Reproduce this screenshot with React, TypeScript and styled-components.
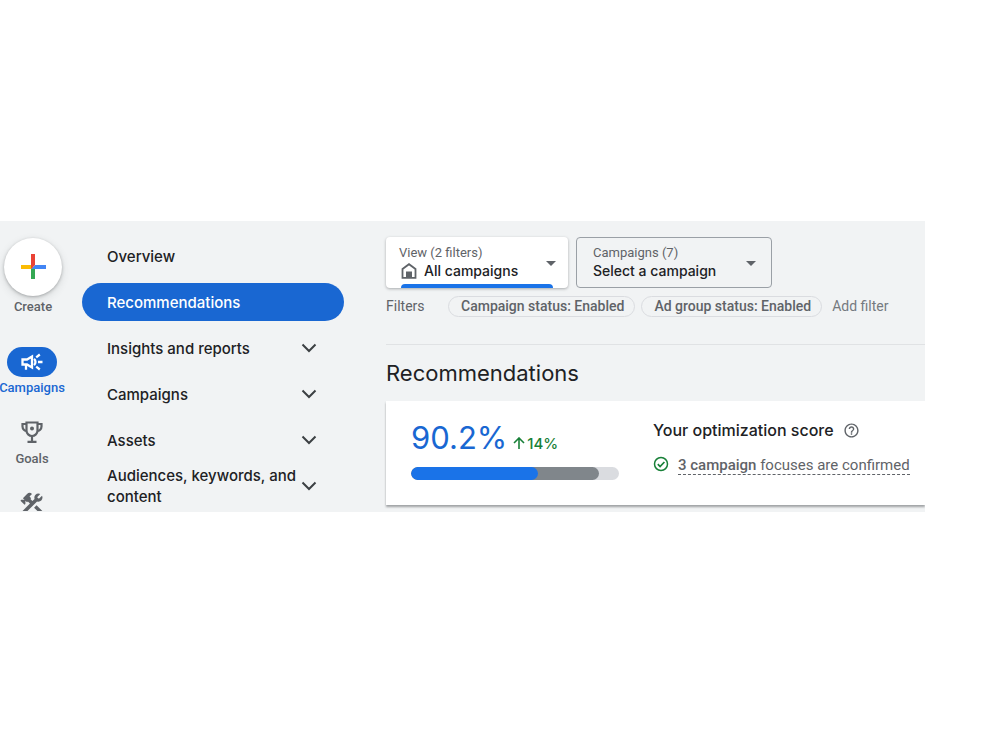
import React from "react";
import styled, { createGlobalStyle, css } from "styled-components";
import { MdConstruction, MdHelpOutline } from "react-icons/md";

const display = `"Google Sans", Inter, "Liberation Sans", sans-serif`;
const text = `Roboto, "Liberation Sans", sans-serif`;

const GlobalStyle = createGlobalStyle`
  * { box-sizing: border-box; }
  body { margin: 0; background: #fff; color: #202124; font-family: ${text}; }
  button, select { font: inherit; color: inherit; border: 0; background: none; padding: 0; margin: 0; cursor: pointer; }
  a { color: inherit; text-decoration: none; }
  h1, h2, p { margin: 0; font-weight: 400; }
  svg { display: block; flex: none; }
`;

const Shell = styled.div`
  display: grid;
  grid-template-columns: 66px 262px minmax(0, 1fr);
  column-gap: 16px;
  margin: 221px 75px 0 0;
  background: #f1f3f4;
  overflow: hidden;
`;

const Rail = styled.nav`
  display: flex;
  flex-direction: column;
  align-items: center;
  padding-top: 17px;
`;

const RailGroup = styled.div`
  display: flex;
  flex-direction: column;
  align-items: center;
  width: 64px;
  align-self: flex-start;
`;

const RailItem = styled.button<{ $active?: boolean; $gap?: number }>`
  && {
    display: flex;
    flex-direction: column;
    align-items: center;
    margin-bottom: ${(p) => p.$gap ?? 0}px;
    color: ${(p) => (p.$active ? "#1967d2" : "#5f6368")};
    font-weight: 500;
    font-size: 13px;
    line-height: 20px;
  }
`;

const CreateCircle = styled.span`
  display: grid;
  place-items: center;
  width: 58px;
  height: 58px;
  border-radius: 50%;
  background: #fff;
  box-shadow: 0 1px 3px rgba(60, 64, 67, 0.35), 0 3px 8px rgba(60, 64, 67, 0.15);
  margin-bottom: 1px;
`;

const ActivePill = styled.span`
  display: grid;
  place-items: center;
  width: 50px;
  height: 30px;
  border-radius: 15px;
  background: #1967d2;
  color: #fff;
  margin-bottom: 1px;
`;

const RailIcon = styled.span<{ $height: number }>`
  height: ${(p) => p.$height}px;
  overflow: hidden;
`;

const Menu = styled.nav`
  display: flex;
  flex-direction: column;
  gap: 8px;
  padding: 16px 0 7px;
`;

const menuEntry = css<{ $active?: boolean }>`
  display: flex;
  align-items: center;
  justify-content: space-between;
  height: 38px;
  padding: 0 27px 0 25px;
  border-radius: 19px;
  font-family: ${display};
  font-weight: 500;
  font-size: 15px;
  line-height: 21px;
  text-align: left;
`;

const MenuLink = styled.a<{ $active?: boolean }>`
  ${menuEntry}
  background: ${(p) => (p.$active ? "#1967d2" : "transparent")};
  color: ${(p) => (p.$active ? "#fff" : "#202124")};
`;

const MenuButton = styled.button`
  && {
    ${menuEntry}
  }
`;

const Content = styled.main`
  display: flex;
  flex-direction: column;
  padding: 16px 0 6px 26px;
`;

const Pickers = styled.div`
  display: flex;
  gap: 8px;
`;

const Picker = styled.div<{ $raised?: boolean }>`
  display: grid;
  grid-template-columns: auto minmax(0, 1fr);
  grid-template-rows: 18px 18px;
  align-content: start;
  align-items: center;
  position: relative;
  width: ${(p) => (p.$raised ? 182 : 196)}px;
  height: 51px;
  padding: ${(p) => (p.$raised ? "7px 14px 0 13px" : "6px 15px 0 16px")};
  border-radius: 4px;
  ${(p) =>
    p.$raised
      ? "background: #fff; box-shadow: 0 1px 3px rgba(60, 64, 67, 0.4);"
      : "border: 1px solid #9aa0a6;"}
`;

const PickerLabel = styled.label`
  grid-column: 1 / 3;
  font-size: 13px;
  line-height: 18px;
  color: #5f6368;
`;

const HomeMark = styled.span`
  padding: 0 7px 0 2px;
`;

const PickerSelect = styled.select`
  && {
    grid-column: 2;
    appearance: none;
    width: 100%;
    font-family: ${display};
    font-weight: 500;
    font-size: 14px;
    line-height: 18px;
    outline: 0;
  }
`;

const Caret = styled.svg<{ $inset: number }>`
  position: absolute;
  right: ${(p) => p.$inset}px;
  top: 50%;
  margin-top: -2px;
  pointer-events: none;
`;

const ActiveBar = styled.span`
  position: absolute;
  left: 15px;
  right: 15px;
  bottom: 0;
  height: 4px;
  border-radius: 4px 4px 0 0;
  background: #1a73e8;
`;

const Filters = styled.div`
  display: flex;
  align-items: center;
  gap: 6px;
  padding: 8px 0 27px;
  border-bottom: 1px solid #e0e2e4;
  font-size: 14px;
  line-height: 19px;
  color: #5f6368;
  white-space: nowrap;
`;

const FiltersLabel = styled.span`
  width: 56px;
`;

const Chip = styled.button`
  && {
    height: 21px;
    padding: 0 10px 0 12px;
    border: 1px solid #dadce0;
    border-radius: 11px;
    font-weight: 500;
  }
`;

const AddFilter = styled.button`
  && {
    margin-left: 4px;
    color: #757a7f;
  }
`;

const Title = styled.h1`
  padding: 14px 0;
  font-family: ${display};
  font-size: 22px;
  line-height: 28px;
`;

const Card = styled.section`
  display: flex;
  gap: 34px;
  padding: 17px 0 25px 25px;
  background: #fff;
  box-shadow: 0 2px 2px rgba(60, 64, 67, 0.45);
  white-space: nowrap;
`;

const Score = styled.div`
  width: 208px;
`;

const ScoreLine = styled.div`
  display: flex;
  align-items: baseline;
  gap: 6px;
  font-family: ${display};
`;

const ScoreValue = styled.span`
  font-size: 31px;
  line-height: 40px;
  color: #1967d2;
`;

const Uplift = styled.span`
  display: flex;
  align-items: center;
  gap: 2px;
  font-weight: 500;
  font-size: 15px;
  color: #188038;
`;

const Track = styled.div`
  display: grid;
  height: 13px;
  margin-top: 9px;
  border-radius: 7px;
  background: #dadce0;
  overflow: hidden;
`;

const Fill = styled.span<{ $color: string }>`
  grid-area: 1 / 1;
  border-radius: 7px;
  background: ${(p) => p.$color};
`;

const Summary = styled.div`
  display: flex;
  flex-direction: column;
  gap: 14px;
`;

const SummaryTitle = styled.h2`
  display: flex;
  align-items: center;
  gap: 9px;
  font-family: ${display};
  font-weight: 500;
  font-size: 16px;
  line-height: 24px;
`;

const HelpButton = styled.button`
  && {
    color: #5f6368;
  }
`;

const Confirmed = styled.p`
  display: flex;
  align-items: flex-start;
  gap: 9px;
  font-size: 15px;
  line-height: 18px;
  color: #5f6368;
`;

const FocusLink = styled.a`
  border-bottom: 1px dashed #5f6368;
  b { font-weight: 500; }
`;

const Plus = () => (
  <svg width="26" height="26" viewBox="0 0 26 26" aria-hidden="true">
    <path fill="#fbbc04" d="M1 11h12v4H1z" />
    <path fill="#4285f4" d="M11 15l4-4h11v4z" />
    <path fill="#34a853" d="M11 15h4v10h-4z" />
    <path fill="#ea4335" d="M11 0h4v11l-4 4z" />
  </svg>
);

const Megaphone = () => (
  <svg width="24" height="24" viewBox="0 0 24 24" fill="none" stroke="currentColor" strokeWidth="2.300" aria-hidden="true">
    <path d="M2.500 9.500v5h4.500l5 3V6.500l-5 3zM6 14.500v5.200" />
    <path d="M14 8.800a4.200 4.200 0 0 1 0 6.400M18 12h4.500M16.200 7.300l3.600-2.800M16.200 16.700l3.600 2.800" />
  </svg>
);

const Trophy = () => (
  <svg width="22" height="22" viewBox="0 0 22 22" fill="none" stroke="currentColor" strokeWidth="2.200" aria-hidden="true">
    <path d="M5.500 1.500h11v8a5.500 5.500 0 0 1-11 0z" />
    <path d="M5.500 3H1.500v2.500A4.500 4.500 0 0 0 6 10M16.500 3h4v2.500A4.500 4.500 0 0 1 16 10M11 15v5.500M6.500 20.800h9" />
    <circle cx="11" cy="7.500" r="2" fill="currentColor" stroke="none" />
  </svg>
);

const Chevron = () => (
  <svg width="16" height="10" viewBox="0 0 16 10" fill="none" stroke="#3c4043" strokeWidth="2" aria-hidden="true">
    <path d="M1.500 1.500L8 8l6.500-6.500" />
  </svg>
);

const Home = () => (
  <svg width="16" height="16" viewBox="0 0 16 16" aria-hidden="true">
    <path d="M1.500 6L8 1.200 14.500 6v8.800h-13z" fill="none" stroke="#5f6368" strokeWidth="1.800" />
    <path d="M5 8.500h6V15H5z" fill="#5f6368" />
  </svg>
);

const PickerCaret = ({ inset }: { inset: number }) => (
  <Caret $inset={inset} width="10" height="5" viewBox="0 0 10 5" aria-hidden="true">
    <path d="M0 0h10L5 5z" fill="#5f6368" />
  </Caret>
);

const CheckRing = () => (
  <svg width="16" height="16" viewBox="0 0 16 16" fill="none" stroke="#188038" aria-hidden="true">
    <circle cx="8" cy="8" r="6.500" strokeWidth="1.500" />
    <path d="M4.800 8.200l2.300 2.300 4.300-4.500" strokeWidth="1.700" />
  </svg>
);

const UpArrow = () => (
  <svg width="12" height="12" viewBox="0 0 12 12" fill="none" stroke="currentColor" strokeWidth="1.600" aria-hidden="true">
    <path d="M6 12V1.500M1 6l5-5 5 5" />
  </svg>
);

const sections = ["Insights and reports", "Campaigns", "Assets", "Audiences, keywords, and content"];
const chips = ["Campaign status: Enabled", "Ad group status: Enabled"];
const fills = [
  { color: "#80868b", share: 90.2 },
  { color: "#1a73e8", share: 61 },
];

export default function App() {
  return (
    <>
      <GlobalStyle />
      <Shell>
        <Rail aria-label="Primary">
          <RailItem $gap={30}>
            <CreateCircle>
              <Plus />
            </CreateCircle>
            Create
          </RailItem>
          <RailGroup>
            <RailItem $active $gap={23}>
              <ActivePill>
                <Megaphone />
              </ActivePill>
              Campaigns
            </RailItem>
            <RailItem $gap={21}>
              <RailIcon $height={28}>
                <Trophy />
              </RailIcon>
              Goals
            </RailItem>
            <RailItem aria-label="Tools">
              <RailIcon $height={21}>
                <MdConstruction size={28} />
              </RailIcon>
            </RailItem>
          </RailGroup>
        </Rail>

        <Menu aria-label="Campaign sections">
          <MenuLink href="#overview">Overview</MenuLink>
          <MenuLink href="#recommendations" $active aria-current="page">
            Recommendations
          </MenuLink>
          {sections.map((name) => (
            <MenuButton key={name} aria-expanded="false">
              {name}
              <Chevron />
            </MenuButton>
          ))}
        </Menu>

        <Content>
          <Pickers>
            <Picker $raised>
              <PickerLabel htmlFor="view">View (2 filters)</PickerLabel>
              <HomeMark>
                <Home />
              </HomeMark>
              <PickerSelect id="view">
                <option>All campaigns</option>
              </PickerSelect>
              <PickerCaret inset={12} />
              <ActiveBar />
            </Picker>
            <Picker>
              <PickerLabel htmlFor="campaign">Campaigns (7)</PickerLabel>
              <PickerSelect id="campaign">
                <option>Select a campaign</option>
              </PickerSelect>
              <PickerCaret inset={15} />
            </Picker>
          </Pickers>

          <Filters>
            <FiltersLabel>Filters</FiltersLabel>
            {chips.map((chip) => (
              <Chip key={chip}>{chip}</Chip>
            ))}
            <AddFilter>Add filter</AddFilter>
          </Filters>

          <Title>Recommendations</Title>

          <Card>
            <Score>
              <ScoreLine>
                <ScoreValue>90.2%</ScoreValue>
                <Uplift>
                  <UpArrow />
                  14%
                </Uplift>
              </ScoreLine>
              <Track role="img" aria-label="Optimization score 90.2%">
                {fills.map((fill) => (
                  <Fill key={fill.color} $color={fill.color} style={{ width: `${fill.share}%` }} />
                ))}
              </Track>
            </Score>
            <Summary>
              <SummaryTitle>
                Your optimization score
                <HelpButton aria-label="About the score">
                  <MdHelpOutline size={17} />
                </HelpButton>
              </SummaryTitle>
              <Confirmed>
                <CheckRing />
                <FocusLink href="#focuses">
                  <b>3 campaign</b> focuses are confirmed
                </FocusLink>
              </Confirmed>
            </Summary>
          </Card>
        </Content>
      </Shell>
    </>
  );
}
